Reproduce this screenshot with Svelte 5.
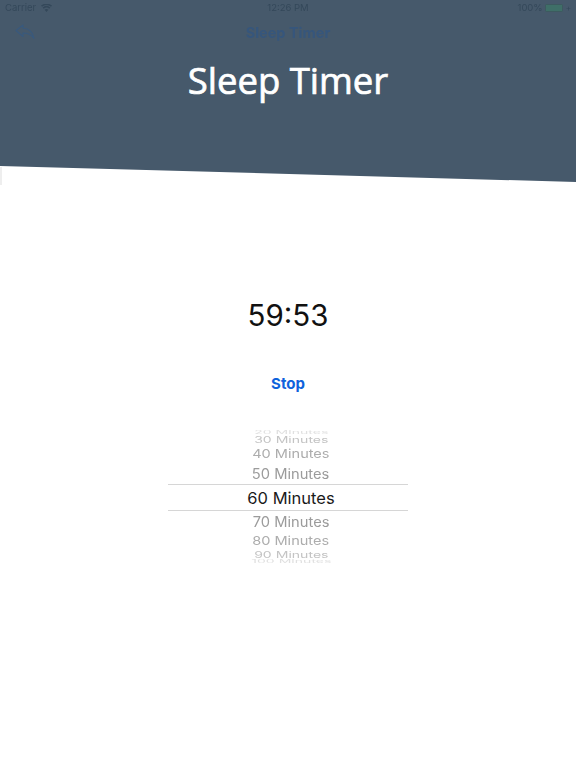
<script>
  const rows = [
    { label: '20 Minutes', cls: 'r4' },
    { label: '30 Minutes', cls: 'r3' },
    { label: '40 Minutes', cls: 'r2' },
    { label: '50 Minutes', cls: 'r1' },
    { label: '60 Minutes', cls: 'r0' },
    { label: '70 Minutes', cls: 'r1 low' },
    { label: '80 Minutes', cls: 'r2 low' },
    { label: '90 Minutes', cls: 'r3 low' },
    { label: '100 Minutes', cls: 'r4 low' }
  ];
</script>

<div class="page">
  <header class="hero">
    <div class="status">
      <div class="left">
        <span>Carrier</span>
        <svg class="wifi" width="11" height="8" viewBox="0 0 11 8"><path d="M5.5 8 L3.6 5.7 A3 3 0 0 1 7.4 5.7 Z M2.7 4.7 L1.6 3.4 A6 6 0 0 1 9.4 3.4 L8.3 4.7 A4.4 4.4 0 0 0 2.7 4.7 Z M1 2.7 L0 1.6 A8.5 8.5 0 0 1 11 1.6 L10 2.7 A7 7 0 0 0 1 2.7 Z" fill="#34485a"/></svg>
      </div>
      <span class="time">12:26 PM</span>
      <div class="right">
        <span>100%</span>
        <span class="battery"></span>
        <span class="plus">+</span>
      </div>
    </div>
    <nav class="nav">
      <svg class="back" width="20" height="16" viewBox="0 0 20 16" fill="none" stroke="#38597e" stroke-width="1.1" stroke-linejoin="round"><path d="M1 6.5 L8 1 V4.3 C13.5 4.3 17.5 7.5 19 14.5 C16.5 10.8 13 9 8 9 V12.5 Z"/></svg>
      <span class="navtitle">Sleep Timer</span>
    </nav>
    <h1>Sleep Timer</h1>
  </header>

  <main class="content">
    <div class="clock">59:53</div>
    <div class="stop">Stop</div>
    <div class="picker">
      {#each rows as row}
        <div class="row {row.cls}"><span>{row.label}</span></div>
      {/each}
    </div>
  </main>
</div>

<style>
  :global(body) { margin: 0; background: #fff; }
  .page {
    width: 576px;
    height: 768px;
    overflow: hidden;
    position: relative;
    font-family: Inter, "Liberation Sans", Arial, sans-serif;
  }
  .page::before {
    content: "";
    position: absolute;
    left: 0;
    top: 167px;
    width: 2px;
    height: 18px;
    background: #eeeeee;
  }
  .hero {
    height: 182px;
    background: #46596b;
    clip-path: polygon(0 0, 100% 0, 100% 100%, 0 166px);
    display: flex;
    flex-direction: column;
    align-items: stretch;
  }
  .status {
    height: 15px;
    padding: 0 5px;
    display: flex;
    align-items: center;
    justify-content: space-between;
    font-size: 9.5px;
    color: #34485a;
    filter: blur(0.3px);
    position: relative;
  }
  .left, .right { display: flex; align-items: center; }
  .left { gap: 5px; }
  .right { gap: 1px; }
  .time { position: absolute; left: 0; right: 0; text-align: center; }
  .battery {
    width: 16px;
    height: 6px;
    background: #3f6f68;
    border: 1px solid #3d5a5f;
    border-radius: 1.5px;
    margin-left: 1px;
  }
  .plus { font-size: 8px; margin-left: 2px; }
  .nav {
    height: 34px;
    position: relative;
    display: flex;
    align-items: center;
    justify-content: center;
  }
  .back { position: absolute; left: 15px; top: 9px; }
  .navtitle {
    font-size: 14.5px;
    font-weight: 700;
    color: #36567c;
    filter: blur(0.3px);
  }
  h1 {
    margin: 4px 0 0;
    text-align: center;
    font-family: "Open Sans", sans-serif;
    font-weight: 400;
    font-size: 36.5px;
    line-height: 54px;
    color: #fff;
    -webkit-text-stroke: 0.7px #fff;
  }
  .content {
    display: flex;
    flex-direction: column;
    align-items: center;
  }
  .clock {
    margin-top: 115px;
    font-size: 29.5px;
    line-height: 36px;
    color: #111;
  }
  .stop {
    margin-top: 42px;
    font-size: 15px;
    line-height: 18px;
    font-weight: 700;
    color: #0f62dc;
  }
  .picker {
    margin-top: 37px;
    width: 240px;
    height: 134px;
    overflow: hidden;
    display: flex;
    flex-direction: column;
    font-size: 16.5px;
  }
  .row {
    display: flex;
    align-items: center;
    justify-content: center;
    flex: none;
    overflow: visible;
    padding-left: 6px;
  }
  .row span { display: block; white-space: nowrap; transform-origin: center; }
  .r0 {
    border-top: 1px solid #d6d6d6;
    border-bottom: 1px solid #d6d6d6;
    height: 25px;
    color: #1a1a1a;
  }
  .r1 { height: 22px; color: #9b9b9b; font-size: 15px; }
  .r1 span { transform: scaleY(0.93) scaleX(0.98); }
  .r2 { height: 17px; color: #adadad; font-size: 15px; }
  .r2 span { transform: scaleY(0.78) scaleX(0.97); }
  .r3 { height: 11px; color: #c4c4c4; font-size: 14.5px; }
  .r3 span { transform: scaleY(0.58) scaleX(0.97); }
  .r4 { height: 4px; color: #e0e0e0; font-size: 14.5px; }
  .r4 span { transform: scaleY(0.3) scaleX(0.97); }
  .low { margin-top: -0.5px; }
</style>
